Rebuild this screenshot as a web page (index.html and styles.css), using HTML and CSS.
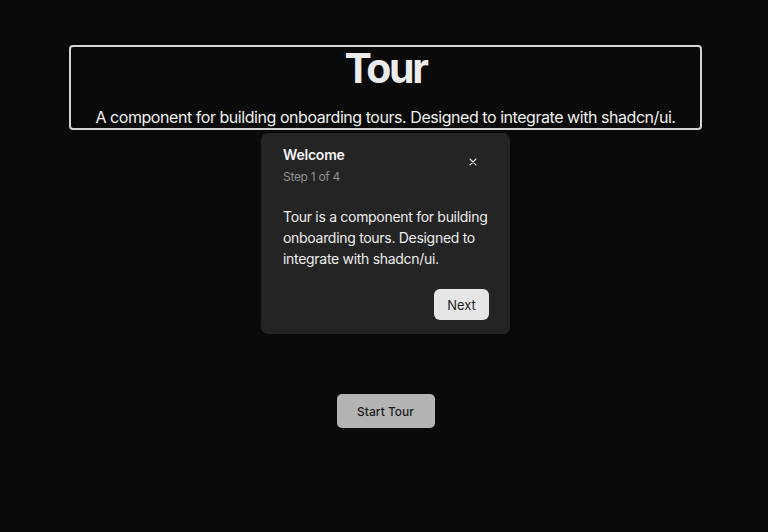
FILE: index.html
```html
<!DOCTYPE html>
<html lang="en">
<head>
    <meta charset="UTF-8">
    <meta name="viewport" content="width=device-width, initial-scale=1.0">
    <title>Tour</title>
    <link rel="stylesheet" href="styles.css">
</head>
<body>
    <main class="page">
        <header class="hero tour-target">
            <h1>Tour</h1>
            <p>A component for building onboarding tours. Designed to integrate with shadcn/ui.</p>
        </header>

        <div class="actions">
            <button class="btn-start">Start Tour</button>
        </div>

        <!-- step popover, anchored under the highlighted header -->
        <div class="tour-popover">
            <div class="popover-head">
                <div>
                    <h3>Welcome</h3>
                    <span class="step">Step 1 of 4</span>
                </div>
                <button class="close" aria-label="Close">
                    <svg width="12" height="12" viewBox="0 0 24 24" fill="none" stroke="currentColor" stroke-width="2.2" stroke-linecap="round">
                        <path d="M18 6 6 18M6 6l12 12"/>
                    </svg>
                </button>
            </div>
            <p class="popover-body">Tour is a component for building onboarding tours. Designed to integrate with shadcn/ui.</p>
            <div class="popover-foot">
                <button class="btn-next">Next</button>
            </div>
        </div>
    </main>
</body>
</html>
```

FILE: styles.css
```css
* {
    box-sizing: border-box;
}
body {
    margin: 0;
    background: #0a0a0a;
    color: #f2f2f2;
    font-family: Inter, "Noto Sans", sans-serif;
}
.page {
    position: relative;
    height: 532px;
    padding: 45px 66px 0 69px;
}
.hero {
    height: 85px;
    border: 2px solid #d4d4d4;
    border-radius: 4px;
    text-align: center;
    padding-top: 1px;
}
.hero h1 {
    margin: 0;
    font-size: 41px;
    font-weight: 700;
    letter-spacing: -2.4px;
    line-height: 40px;
    color: #ececec;
}
.hero p {
    margin: 19px 0 0;
    font-size: 16px;
    line-height: 20px;
    letter-spacing: -0.45px;
    color: #f0f0f0;
}
.actions {
    display: flex;
    justify-content: center;
    padding-top: 264px;
}
.btn-start {
    width: 98px;
    height: 34px;
    border: none;
    border-radius: 5px;
    background: #b4b4b4;
    color: #1c1c1c;
    font-family: inherit;
    font-size: 12px;
    font-weight: 500;
}
.tour-popover {
    position: absolute;
    left: 261px;
    top: 133px;
    width: 249px;
    height: 201px;
    background: #242424;
    border-radius: 7px;
    padding: 12px 18px 14px 22px;
    display: flex;
    flex-direction: column;
}
.popover-head {
    display: flex;
    justify-content: space-between;
    align-items: flex-start;
}
.popover-head h3 {
    margin: 0;
    font-size: 14px;
    font-weight: 600;
    line-height: 20px;
    letter-spacing: -0.2px;
    color: #f4f4f4;
}
.step {
    display: block;
    margin-top: 4px;
    font-size: 12px;
    line-height: 16px;
    letter-spacing: -0.3px;
    color: #8f8f8f;
}
.close {
    background: none;
    border: none;
    color: #e8e8e8;
    padding: 0;
    margin: 11px 13px 0 0;
    width: 12px;
    height: 12px;
    display: flex;
}
.popover-body {
    margin: 21px 0 0;
    font-size: 14px;
    line-height: 21px;
    letter-spacing: -0.3px;
    color: #ededed;
}
.popover-foot {
    margin-top: auto;
    display: flex;
    justify-content: flex-end;
    padding-right: 3px;
}
.btn-next {
    width: 55px;
    height: 31px;
    border: none;
    border-radius: 6px;
    background: #e6e6e6;
    color: #262626;
    font-family: inherit;
    font-size: 13px;
    font-weight: 400;
}
```
